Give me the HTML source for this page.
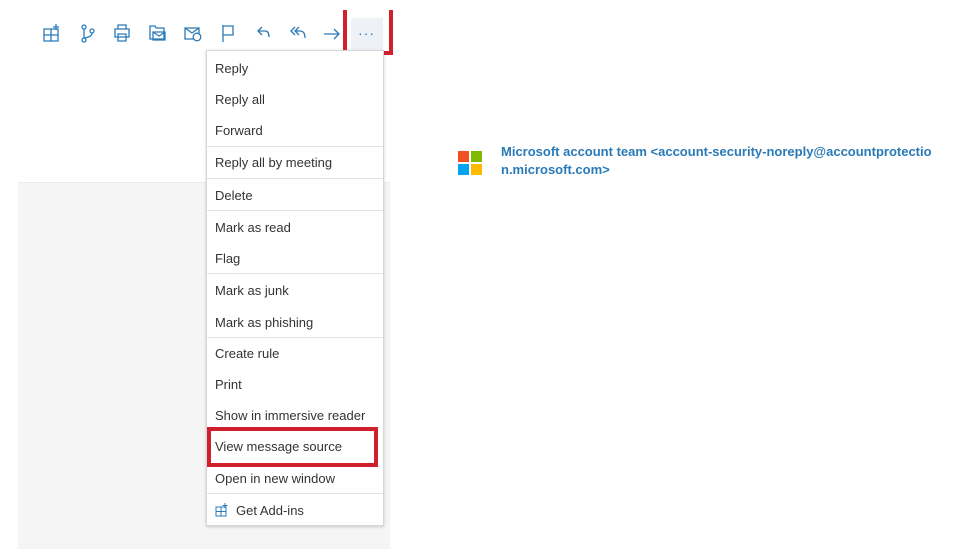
<!DOCTYPE html>
<html><head><meta charset="utf-8"><style>
body{margin:0;width:969px;height:559px;background:#fff;position:relative;overflow:hidden;font-family:"Liberation Sans",sans-serif;}
.gray{position:absolute;left:18px;top:182px;width:372px;height:366px;background:#f5f5f5;border-top:1px solid #ececec}
.menu{position:absolute;left:206px;top:50px;width:176px;height:474px;background:#fff;border:1px solid #d6d6d6;box-shadow:0 1px 3px rgba(0,0,0,.18)}
.it{position:absolute;left:8px;font-size:13px;color:#333;line-height:16px}
.sep{position:absolute;left:0;right:0;height:1px;background:#e3e3e3}
.red{position:absolute;border:4px solid #d0202e;box-sizing:border-box}
.from{position:absolute;left:501px;top:143px;font-size:13px;font-weight:bold;color:#2a7ab8;line-height:18px;width:440px}
</style></head><body>
<div class="gray"></div>
<svg width="400" height="50" style="position:absolute;left:0;top:0" fill="none" stroke="#2a7ab8" stroke-width="1.3">
<path d="M44 29h14v12H44zM51 29v12M44 35h14M56 24v6M53 27h6"/>
<circle cx="84" cy="27" r="2"/><circle cx="84" cy="40" r="2"/><circle cx="92" cy="31" r="2"/><path d="M84 29v9M92 33q0 4-8 5"/>
<path d="M118 29v-4h8v4M115 29h14v8h-14zM118 34h8v7h-8z"/>
<path d="M150 26h5l1 2h8v11h-14zM153 32h12v8h-12zM153 32l6 4 6-4"/>
<path d="M185 28h14v11h-14zM185 28l7 5 7-5"/><circle cx="197" cy="37" r="3.8" fill="#fff"/>
<path d="M223 42V25M223 26h10v9h-10"/>
<path d="M262 27l-4 4 4 4M258 31h7q4 0 4 6"/>
<path d="M295 27l-4 4 4 4M299 27l-4 4 4 4M295 31h5q5 0 5 7"/>
<path d="M324 34h15M334 29l5 5-5 5"/>
</svg>
<div style="position:absolute;left:351px;top:18px;width:32px;height:32px;background:#eef2f6"></div>
<div style="position:absolute;left:358px;top:25px;font-size:14px;color:#2a7ab8;letter-spacing:1px">···</div>
<div class="red" style="left:343px;top:10px;width:50px;height:45px;border-top:none"></div>
<div class="menu">
<div class="it" style="top:10px">Reply</div>
<div class="it" style="top:41px">Reply all</div>
<div class="it" style="top:72px">Forward</div>
<div class="sep" style="top:95px"></div>
<div class="it" style="top:104px">Reply all by meeting</div>
<div class="sep" style="top:127px"></div>
<div class="it" style="top:137px">Delete</div>
<div class="sep" style="top:159px"></div>
<div class="it" style="top:169px">Mark as read</div>
<div class="it" style="top:200px">Flag</div>
<div class="sep" style="top:222px"></div>
<div class="it" style="top:232px">Mark as junk</div>
<div class="it" style="top:264px">Mark as phishing</div>
<div class="sep" style="top:286px"></div>
<div class="it" style="top:295px">Create rule</div>
<div class="it" style="top:326px">Print</div>
<div class="it" style="top:357px">Show in immersive reader</div>
<div class="it" style="top:388px">View message source</div>
<div class="it" style="top:420px">Open in new window</div>
<div class="sep" style="top:442px"></div>
<svg width="14" height="14" style="position:absolute;left:8px;top:452px" fill="none" stroke="#2a7ab8" stroke-width="1"><path d="M1 4h10v9H1zM6 4v9M1 8.5h10M10 0v5M7.5 2.5h5"/></svg>
<div class="it" style="top:452px;left:29px">Get Add-ins</div>
</div>
<div class="red" style="left:207px;top:427px;width:171px;height:40px"></div>
<div style="position:absolute;left:458px;top:151px;width:11px;height:11px;background:#f25022"></div>
<div style="position:absolute;left:471px;top:151px;width:11px;height:11px;background:#7fba00"></div>
<div style="position:absolute;left:458px;top:164px;width:11px;height:11px;background:#00a4ef"></div>
<div style="position:absolute;left:471px;top:164px;width:11px;height:11px;background:#ffb900"></div>
<div class="from">Microsoft account team &lt;account-security-noreply@accountprotectio<br>n.microsoft.com&gt;</div>
</body></html>
